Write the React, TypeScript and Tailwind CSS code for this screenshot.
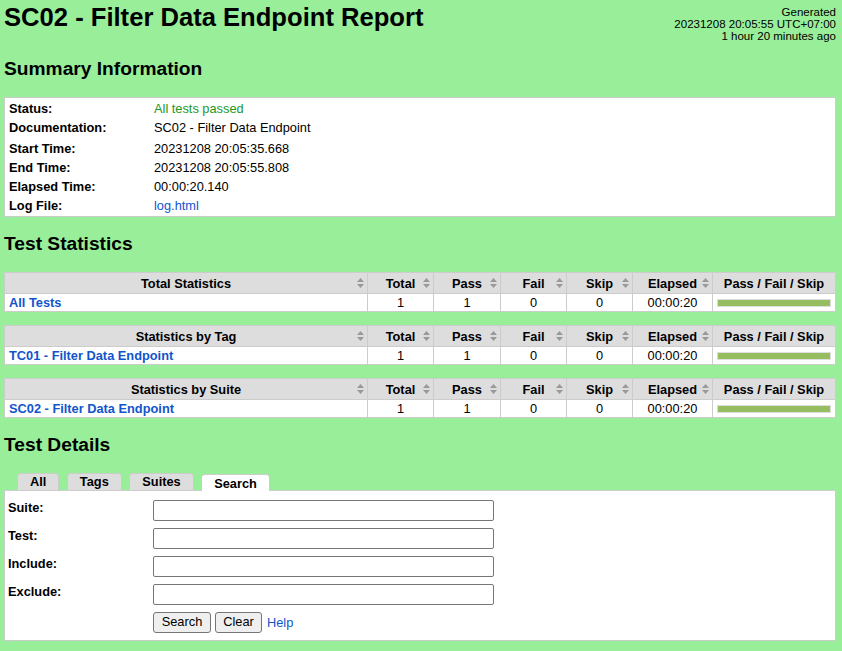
import React from "react";

const summaryRows = [
  { label: "Status:", value: "All tests passed", kind: "pass" },
  { label: "Documentation:", value: "SC02 - Filter Data Endpoint", kind: "doc" },
  { label: "Start Time:", value: "20231208 20:05:35.668" },
  { label: "End Time:", value: "20231208 20:05:55.808" },
  { label: "Elapsed Time:", value: "00:00:20.140" },
  { label: "Log File:", value: "log.html", kind: "link" },
];

const statTables = [
  { title: "Total Statistics", name: "All Tests" },
  { title: "Statistics by Tag", name: "TC01 - Filter Data Endpoint" },
  { title: "Statistics by Suite", name: "SC02 - Filter Data Endpoint" },
];

const numCols = ["Total", "Pass", "Fail", "Skip", "Elapsed"];
const numValues = ["1", "1", "0", "0", "00:00:20"];

function SortIcon() {
  return (
    <svg
      width="7"
      height="10"
      viewBox="0 0 7 10"
      className="absolute right-[3px] top-1/2 -translate-y-1/2"
    >
      <polygon points="3.5,0 7,4 0,4" fill="#999" />
      <polygon points="0,6 7,6 3.5,10" fill="#999" />
    </svg>
  );
}

function StatTable({ title, name }: { title: string; name: string }) {
  return (
    <table className="w-full table-fixed border-collapse mb-[13px]">
      <colgroup>
        <col className="w-[363px]" />
        <col className="w-[66px]" />
        <col className="w-[67px]" />
        <col className="w-[66px]" />
        <col className="w-[66px]" />
        <col className="w-[80px]" />
        <col />
      </colgroup>
      <thead>
        <tr>
          <th className="relative h-[21px] p-0 border border-[#ccc] bg-[#ddd] font-bold text-center leading-[15px]">
            {title}
            <SortIcon />
          </th>
          {numCols.map((c) => (
            <th
              key={c}
              className="relative h-[21px] p-0 border border-[#ccc] bg-[#ddd] font-bold text-center leading-[15px]"
            >
              {c}
              <SortIcon />
            </th>
          ))}
          <th className="h-[21px] p-0 border border-[#ccc] bg-[#ddd] font-bold text-center leading-[15px]">
            Pass / Fail / Skip
          </th>
        </tr>
      </thead>
      <tbody>
        <tr className="bg-white">
          <td className="h-[18px] py-0 px-[4px] border border-[#ccc] text-left leading-[15px]">
            <a className="font-bold text-[#15c]">{name}</a>
          </td>
          {numValues.map((v, i) => (
            <td key={i} className="h-[18px] p-0 border border-[#ccc] text-center leading-[15px]">
              {v}
            </td>
          ))}
          <td className="h-[18px] py-0 px-[4px] border border-[#ccc]">
            <div className="h-[8px] border border-[#ddd] bg-[#97bd61]" />
          </td>
        </tr>
      </tbody>
    </table>
  );
}

export default function App() {
  return (
    <div className="min-h-[651px] bg-[#99ee99] text-black text-[12.8px] font-['Liberation_Sans',Arial,sans-serif] pl-[4px] pr-[6px] pb-[10px]">
      {/* header */}
      <div className="flex justify-between items-start pt-[6px] h-[42px]">
        <h1 className="text-[25.6px] font-bold leading-[22px]">SC02 - Filter Data Endpoint Report</h1>
        <div className="text-right text-[11.52px] leading-[12px]">
          <div>Generated</div>
          <div>20231208 20:05:55 UTC+07:00</div>
          <div>1 hour 20 minutes ago</div>
        </div>
      </div>

      {/* summary */}
      <h2 className="mt-[16px] mb-[17px] text-[19.2px] font-bold leading-[22px]">Summary Information</h2>
      <div className="border border-[#ccc] bg-white p-[1px]">
        {summaryRows.map((r) => (
          <div
            key={r.label}
            className={`flex leading-[15px] ${r.kind === "doc" ? "pt-[2px] pb-[4px]" : "py-[2px]"}`}
          >
            <div className="w-[145px] px-[3px] font-bold">{r.label}</div>
            <div className="px-[3px]">
              {r.kind === "pass" && <span className="text-[#292]">{r.value}</span>}
              {r.kind === "link" && <a className="text-[#15c]">{r.value}</a>}
              {!r.kind || r.kind === "doc" ? r.value : null}
            </div>
          </div>
        ))}
      </div>

      {/* statistics */}
      <h2 className="mt-[16px] mb-[17px] text-[19.2px] font-bold leading-[22px]">Test Statistics</h2>
      {statTables.map((t) => (
        <StatTable key={t.title} title={t.title} name={t.name} />
      ))}

      {/* details */}
      <h2 className="mt-[16px] mb-[17px] text-[19.2px] font-bold leading-[22px]">Test Details</h2>
      <div className="flex items-end gap-[7.5px] ml-[13px]">
        {["All", "Tags", "Suites"].map((t) => (
          <div
            key={t}
            className="h-[17px] px-[12px] bg-[#ddd] border border-b-0 border-[#ccc] rounded-t-[4px] font-bold leading-[16px]"
          >
            {t}
          </div>
        ))}
        <div className="relative z-10 -mb-px h-[17px] px-[12px] bg-white border border-b-0 border-[#ccc] rounded-t-[4px] font-bold leading-[17px]">
          Search
        </div>
      </div>
      <div className="border border-[#ccc] bg-white pt-[9px] pb-[7px] px-[3px] flex flex-col gap-[7px]">
        {["Suite:", "Test:", "Include:", "Exclude:"].map((l) => (
          <div key={l} className="flex items-start h-[21px]">
            <div className="w-[145px] font-bold leading-[15px]">{l}</div>
            <input className="w-[341px] h-[21px] border border-[#767676] rounded-[2px] bg-white" />
          </div>
        ))}
        <div className="flex items-center h-[21px] pl-[145px]">
          <button className="w-[58px] h-[21px] border border-[#767676] rounded-[3px] bg-[#efefef] leading-none">
            Search
          </button>
          <button className="ml-[4px] w-[47px] h-[21px] border border-[#767676] rounded-[3px] bg-[#efefef] leading-none">
            Clear
          </button>
          <a className="ml-[5px] text-[#15c]">Help</a>
        </div>
      </div>
    </div>
  );
}
